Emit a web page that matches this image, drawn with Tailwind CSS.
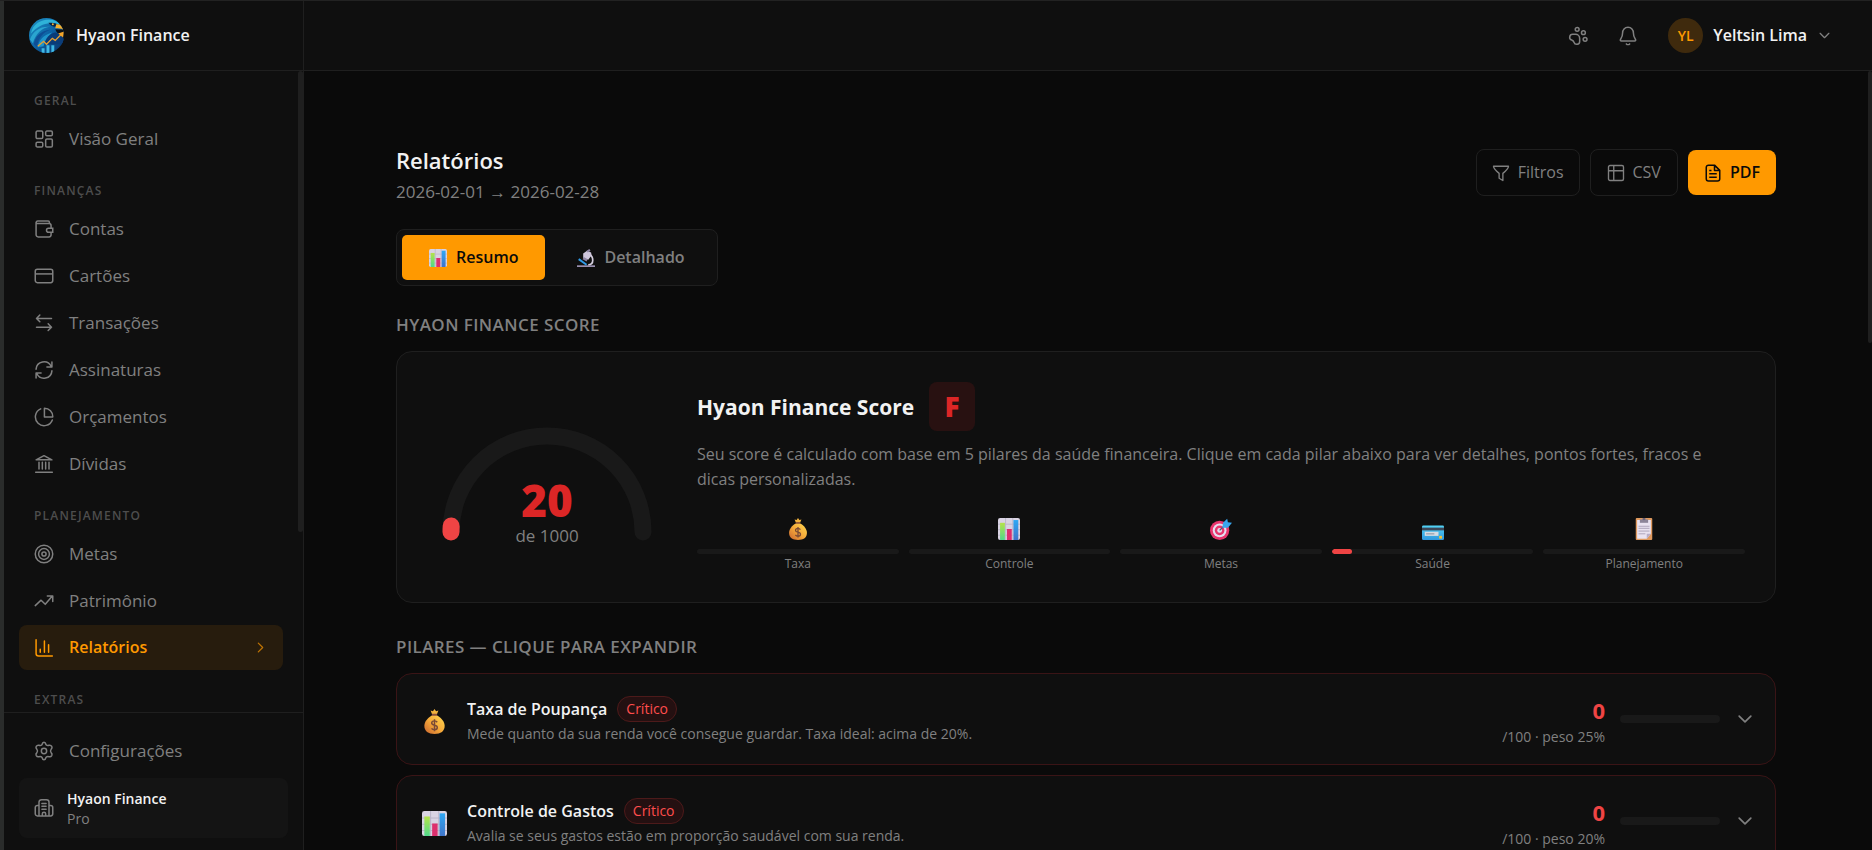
<!DOCTYPE html>
<html lang="pt-BR">
<head>
    <meta charset="UTF-8">
    <meta name="viewport" content="width=device-width, initial-scale=1.0">
    <title>Relatórios - Hyaon Finance</title>
    <script src="https://cdn.jsdelivr.net/npm/@tailwindcss/browser@4"></script>
</head>
<body class="h-screen overflow-hidden bg-[#0a0a0a] text-[17px] leading-[25px] text-[#808080] font-['Open_Sans','Noto_Sans',sans-serif]">

    <!-- Shared icons -->
    <svg class="absolute size-0" xmlns="http://www.w3.org/2000/svg">
        <defs>
            <linearGradient id="bagFill" x1="1" y1="0" x2="0" y2="1"><stop offset="0" stop-color="#ffd84f"/><stop offset=".5" stop-color="#f5a93a"/><stop offset="1" stop-color="#c9642f"/></linearGradient>
            <linearGradient id="barGreen" x1="0" y1="0" x2="0" y2="1"><stop offset="0" stop-color="#b5e34a"/><stop offset="1" stop-color="#4fd98a"/></linearGradient>
            <linearGradient id="barBlue" x1="0" y1="0" x2="0" y2="1"><stop offset="0" stop-color="#2fa8f5"/><stop offset="1" stop-color="#3f74c9"/></linearGradient>
            <linearGradient id="cardFill" x1="0" y1="0" x2="0" y2="1"><stop offset="0" stop-color="#52d3f5"/><stop offset="1" stop-color="#2f97dd"/></linearGradient>
        </defs>
        <symbol id="bag" viewBox="0 0 32 32">
            <path d="M11 2l3 1 2-3 2 3 3-1-2 5h-6z" fill="#f3b33d"/>
            <path d="M13 6h6l1 4h-8z" fill="#8b4f3a"/>
            <path d="M12 8.500h8c5 3 9 8 9 13 0 7-5 10.500-13 10.500S3 28.500 3 21.500c0-5 4-10 9-13z" fill="url(#bagFill)"/>
            <path d="M19.500 17c-.8-1.200-2-1.800-3.500-1.800-2 0-3.600 1.100-3.600 2.800s1.500 2.300 3.600 2.700 3.600 1.300 3.600 3-1.600 2.800-3.600 2.800c-1.600 0-3-.6-3.800-1.800M16 13v15.500" fill="none" stroke="#7a4a36" stroke-width="1.900"/>
        </symbol>
        <symbol id="chart" viewBox="0 0 32 32">
            <rect width="32" height="32" rx="3" fill="#d9d3e3"/>
            <path d="M0 9h32M0 17h32M0 25h32M11 0v32M21.500 0v32" stroke="#b9b2c6" stroke-width="1.200"/>
            <rect x="3" y="7" width="7" height="25" fill="url(#barGreen)"/>
            <rect x="13" y="16" width="7" height="16" fill="#dd2f6e"/>
            <rect x="22.500" y="3" width="7" height="29" fill="url(#barBlue)"/>
        </symbol>
        <symbol id="dart" viewBox="0 0 32 32">
            <circle cx="14" cy="18" r="14" fill="#e8356d"/>
            <circle cx="14" cy="18" r="10" fill="#e6dff0"/>
            <circle cx="14" cy="18" r="7" fill="#e8356d"/>
            <circle cx="14" cy="18" r="3.500" fill="#e6dff0"/>
            <path d="M14 18L24 8" stroke="#5d5470" stroke-width="2"/>
            <path d="M18 14l1-7 6-6 1 5 6 1-6 7z" fill="#39a6ee"/>
        </symbol>
        <symbol id="credit" viewBox="0 0 32 32">
            <rect y="11" width="32" height="21" rx="2" fill="url(#cardFill)"/>
            <rect y="14" width="32" height="4" fill="#3c4657"/>
            <rect x="4" y="20" width="20" height="6" fill="#d5dbe2"/>
            <rect x="6" y="22" width="12" height="2" fill="#9da6b2"/>
            <rect x="25" y="26" width="4" height="4" fill="#f2c437"/>
        </symbol>
        <symbol id="clipboard" viewBox="0 0 32 32">
            <rect x="4" width="24" height="32" rx="1.500" fill="#e09a5f"/>
            <path d="M6 3h20v20l-6 7H6z" fill="#e9e2f1"/>
            <path d="M26 23h-6v7z" fill="#b9adc8"/>
            <path d="M10 2h12v5H10z" fill="#8c8499"/>
            <path d="M14 0h4v3h-4z" fill="#6d6579"/>
            <path d="M8 12h16M8 15h16M8 19h16M8 23h10" stroke="#a79db5" stroke-width="1.300"/>
        </symbol>
        <symbol id="microscope" viewBox="0 0 32 32">
            <path d="M0 29h32v3H0z" fill="#9a90b0"/>
            <path d="M21 10c5 1 7 5 7 10s-3 8-8 8" fill="none" stroke="#d5cfdf" stroke-width="3"/>
            <path d="M11 8l7-5 7 3 1 5-6 8-9-3z" fill="#cfc6dc"/>
            <path d="M17 3l5-3 2 3-5 3zM12 14l7 4-2 4-7-4z" fill="#8d83a3"/>
            <path d="M3 18l14 10" stroke="#2f9be8" stroke-width="3.500"/>
        </symbol>
        <symbol id="down" viewBox="0 0 24 24">
            <path d="M5 8.500l7 7 7-7" fill="none" stroke="currentColor" stroke-width="2" stroke-linecap="round" stroke-linejoin="round"/>
        </symbol>
    </svg>

    <div class="flex h-full border-t border-[#222222]">
        <div class="w-1 shrink-0 bg-[#2a2c2b]"></div>

        <!-- Sidebar -->
        <aside class="flex w-[300px] shrink-0 flex-col border-r border-[#1f1f1f] bg-[#0f0f0f]">
            <div class="flex h-[70px] shrink-0 items-center gap-3 border-b border-[#1f1f1f] pl-[25px]">
                <svg class="size-[35px]" viewBox="0 0 36 36">
                    <defs>
                        <linearGradient id="logoFill" x1="0" y1="0" x2="1" y2="1"><stop offset="0" stop-color="#2098c8"/><stop offset=".5" stop-color="#0d62a4"/><stop offset="1" stop-color="#0a2f63"/></linearGradient>
                        <clipPath id="logoClip"><circle cx="18" cy="18" r="18"/></clipPath>
                    </defs>
                    <g clip-path="url(#logoClip)">
                        <rect width="36" height="36" fill="url(#logoFill)"/>
                        <path d="M9 5C16 0 27 0 33 7l-7-1C18 4 9 8 2 16c1-5 3-8 7-11z" fill="#2fb3d8"/>
                        <path d="M1 22C4 13 12 8 22 9c-9 1-15 7-18 17z" fill="#2aa5d0"/>
                        <path d="M5 27c1-8 7-14 17-15-8 3-12 8-14 18z" fill="#0e4f96"/>
                        <path d="M9 30c1-7 6-13 15-15-5 4-8 8-9 14z" fill="#1f95cb"/>
                        <path d="M17 24c2-5 5-8 10-9l9 3v9H16z" fill="#0b3c78"/>
                        <path d="M27 11.500l9 .5v10l-3-5c-2 0-5-2-6-5.500z" fill="#0d1218"/>
                        <path d="M20 5c4 0 7 0 10 2l-3 2c-3 0-5-1-7-4z" fill="#0b2340"/>
                        <circle cx="24.500" cy="6.500" r="1" fill="#f5b73a"/>
                        <path d="M28 6.500c4 0 7 1.500 7.500 5.500-3-1.500-5-1.500-8.500-1.500z" fill="#f6b02c"/>
                        <path d="M13 36v-5h3v5zM18 36v-8h3v8zM23 36v-8h3v8z" fill="#3fb9e4"/>
                        <path d="M9 29l6-5 3 3 6-6 3 2 6-6" fill="none" stroke="#e9a030" stroke-width="1.300"/>
                        <path d="M30 16l6-2-1 6z" fill="#f3a52a"/>
                    </g>
                </svg>
                <span class="text-[16px] font-semibold text-[#f2f2f2]">Hyaon Finance</span>
            </div>

            <div class="flex min-h-0 flex-1">
                <nav class="flex flex-1 flex-col gap-[15px] overflow-hidden p-[15px]">
                    <div class="flex flex-col gap-[2px]">
                        <h3 class="-mb-[2px] h-[30px] px-[15px] text-[12px] leading-[30px] font-semibold tracking-widest text-[#4d4d4d]">GERAL</h3>
                        <a href="#" class="flex h-[45px] items-center gap-[15px] rounded-lg px-[15px]">
                            <svg class="size-5" viewBox="0 0 24 24" fill="none" stroke="currentColor" stroke-width="1.800"><rect x="2.500" y="2.500" width="8" height="9" rx="1.500"/><rect x="14" y="2.500" width="8" height="5.500" rx="1.500"/><rect x="2.500" y="16" width="8" height="5.500" rx="1.500"/><rect x="14" y="12" width="8" height="9.500" rx="1.500"/></svg>
                            Visão Geral
                        </a>
                    </div>
                    <div class="flex flex-col gap-[2px]">
                        <h3 class="-mb-[2px] h-[30px] px-[15px] text-[12px] leading-[30px] font-semibold tracking-widest text-[#4d4d4d]">FINANÇAS</h3>
                        <a href="#" class="flex h-[45px] items-center gap-[15px] rounded-lg px-[15px]">
                            <svg class="size-5" viewBox="0 0 24 24" fill="none" stroke="currentColor" stroke-width="1.800"><path d="M20.500 11V8a2.500 2.500 0 0 0-2.500-2.500H4.500a2 2 0 0 1-2-2V19A2.500 2.500 0 0 0 5 21.500h13a2.500 2.500 0 0 0 2.500-2.500v-3M2.500 4a2 2 0 0 1 2-1.500H17A1.500 1.500 0 0 1 18.500 4v1.500"/><path d="M22.500 11h-5a2.500 2.500 0 0 0 0 5h5z"/></svg>
                            Contas
                        </a>
                        <a href="#" class="flex h-[45px] items-center gap-[15px] rounded-lg px-[15px]">
                            <svg class="size-5" viewBox="0 0 24 24" fill="none" stroke="currentColor" stroke-width="1.800"><rect x="1.500" y="4" width="21" height="16" rx="2.500"/><path d="M1.500 9.500h21"/></svg>
                            Cartões
                        </a>
                        <a href="#" class="flex h-[45px] items-center gap-[15px] rounded-lg px-[15px]">
                            <svg class="size-5" viewBox="0 0 24 24" fill="none" stroke="currentColor" stroke-width="1.800" stroke-linecap="round" stroke-linejoin="round"><path d="M21 6.500H3M7 2.500l-4 4 4 4M3 17h18M17 13l4 4-4 4"/></svg>
                            Transações
                        </a>
                        <a href="#" class="flex h-[45px] items-center gap-[15px] rounded-lg px-[15px]">
                            <svg class="size-5" viewBox="0 0 24 24" fill="none" stroke="currentColor" stroke-width="1.800" stroke-linecap="round" stroke-linejoin="round"><path d="M2.500 11A9.500 9.500 0 0 1 20.500 7.500M21.500 2.500v6h-6M21.500 13a9.500 9.500 0 0 1-18 3.500M2.500 21.500v-6h6"/></svg>
                            Assinaturas
                        </a>
                        <a href="#" class="flex h-[45px] items-center gap-[15px] rounded-lg px-[15px]">
                            <svg class="size-5" viewBox="0 0 24 24" fill="none" stroke="currentColor" stroke-width="1.800" stroke-linecap="round" stroke-linejoin="round"><path d="M8 2.200a10.500 10.500 0 1 0 14 13.300M12.500 1.500a10 10 0 0 1 10 10.500h-10z"/></svg>
                            Orçamentos
                        </a>
                        <a href="#" class="flex h-[45px] items-center gap-[15px] rounded-lg px-[15px]">
                            <svg class="size-5" viewBox="0 0 24 24" fill="none" stroke="currentColor" stroke-width="1.800" stroke-linecap="round" stroke-linejoin="round"><path d="M2.500 7L12 2l9.500 5zM6 10v8M10 10v8M14 10v8M18 10v8M2 22h20"/></svg>
                            Dívidas
                        </a>
                    </div>
                    <div class="flex flex-col gap-[2px]">
                        <h3 class="-mb-[2px] h-[30px] px-[15px] text-[12px] leading-[30px] font-semibold tracking-widest text-[#4d4d4d]">PLANEJAMENTO</h3>
                        <a href="#" class="flex h-[45px] items-center gap-[15px] rounded-lg px-[15px]">
                            <svg class="size-5" viewBox="0 0 24 24" fill="none" stroke="currentColor" stroke-width="1.800"><circle cx="12" cy="12" r="10.500"/><circle cx="12" cy="12" r="6.500"/><circle cx="12" cy="12" r="2.500"/></svg>
                            Metas
                        </a>
                        <a href="#" class="flex h-[45px] items-center gap-[15px] rounded-lg px-[15px]">
                            <svg class="size-5" viewBox="0 0 24 24" fill="none" stroke="currentColor" stroke-width="1.800" stroke-linecap="round" stroke-linejoin="round"><path d="M1.500 17.500L8.500 11l5 5L22 6M16 6h6.500v6.500"/></svg>
                            Patrimônio
                        </a>
                        <a href="#" class="flex h-[45px] items-center gap-[15px] rounded-lg bg-[#271c0d] px-[15px] text-[16px] font-semibold text-[#ff9900]" aria-current="page">
                            <svg class="size-5" viewBox="0 0 24 24" fill="none" stroke="currentColor" stroke-width="1.800" stroke-linecap="round" stroke-linejoin="round"><path d="M2.500 2v16.500a3 3 0 0 0 3 3H22M7.500 13.500V17M12.500 3.500V17M17.500 8v9"/></svg>
                            <span class="flex-1">Relatórios</span>
                            <svg class="size-[15px] opacity-70" viewBox="0 0 24 24" fill="none" stroke="currentColor" stroke-width="2" stroke-linecap="round" stroke-linejoin="round"><path d="M8.500 5l7 7-7 7"/></svg>
                        </a>
                    </div>
                    <h3 class="h-[30px] px-[15px] text-[12px] leading-[30px] font-semibold tracking-widest text-[#4d4d4d]">EXTRAS</h3>
                </nav>
                <div class="w-[5px] shrink-0"><div class="h-[461px] rounded-full bg-[#1f1f1f]"></div></div>
            </div>

            <div class="flex shrink-0 flex-col gap-[5px] border-t border-[#1f1f1f] px-[15px] pt-[15px] pb-3">
                <a href="#" class="flex h-[45px] items-center gap-[15px] rounded-lg px-[15px]">
                    <svg class="size-5" viewBox="0 0 24 24" fill="none" stroke="currentColor" stroke-width="1.800" stroke-linejoin="round"><path d="M9.500 4.500C10 2.500 10.500 1.500 12 1.500s2 1 2.500 3c1 1 2 1.200 3.500.7 2-.5 2.500 0 3.300 1.300.8 1.500.7 2.200-.8 3.500-1 1.300-1 2.700 0 4 1.500 1.300 1.600 2 .8 3.500-.8 1.300-1.300 1.800-3.300 1.300-1.500-.5-2.500-.3-3.500.7-.5 2-1 3-2.500 3s-2-1-2.500-3c-1-1-2-1.200-3.500-.7-2 .5-2.500 0-3.300-1.300-.8-1.500-.7-2.200.8-3.500 1-1.300 1-2.700 0-4-1.500-1.300-1.600-2-.8-3.500C3.500 5.200 4 4.700 6 5.200c1.500.5 2.500.3 3.500-.7z"/><circle cx="12" cy="12" r="3.200"/></svg>
                    Configurações
                </a>
                <button type="button" class="flex h-[60px] items-center gap-[13px] rounded-lg bg-[#141414] px-[15px] text-left">
                    <svg class="size-5" viewBox="0 0 24 24" fill="none" stroke="currentColor" stroke-width="1.800" stroke-linecap="round" stroke-linejoin="round"><path d="M6 21.500V5a3 3 0 0 1 3-3h6a3 3 0 0 1 3 3v16.500M6 9H4a2.500 2.500 0 0 0-2.500 2.500V19A2.500 2.500 0 0 0 4 21.500h16a2.500 2.500 0 0 0 2.500-2.500v-7.500A2.500 2.500 0 0 0 20 9h-2M9.500 6.500h5M9.500 10h5M9.500 13.500h5M10 21.500V19a2 2 0 0 1 4 0v2.500"/></svg>
                    <span class="flex flex-col pt-[2px] text-[14px] leading-5">
                        <span class="font-semibold text-[#f2f2f2]">Hyaon Finance</span>
                        <span>Pro</span>
                    </span>
                </button>
            </div>
        </aside>

        <div class="flex min-w-0 flex-1 flex-col">
            <!-- Top bar -->
            <header class="flex h-[70px] shrink-0 items-center justify-end border-b border-[#1f1f1f] bg-[#0f0f0f] pr-10">
                <button type="button" aria-label="Pets" class="mr-[30px]">
                    <svg class="size-5" viewBox="0 0 24 24" fill="none" stroke="currentColor" stroke-width="1.800"><circle cx="11" cy="4" r="2.300"/><circle cx="18.500" cy="8" r="2.300"/><circle cx="20.500" cy="16" r="2.300"/><path d="M9 10a5 5 0 0 1 5 5v3.500a3.500 3.500 0 0 1-6.840 1.045Q6.520 17.480 4.460 16.840A3.500 3.500 0 0 1 5.500 10Z"/></svg>
                </button>
                <button type="button" aria-label="Notificações" class="mr-[30px]">
                    <svg class="size-5" viewBox="0 0 24 24" fill="none" stroke="currentColor" stroke-width="1.800" stroke-linecap="round" stroke-linejoin="round"><path d="M12 1.500c-4 0-6.500 3-6.500 7 0 4.500-1 5.500-2.500 7.500-.7 1 0 2 1 2h16c1 0 1.700-1 1-2-1.500-2-2.500-3-2.500-7.500 0-4-2.500-7-6.500-7zM10 21.500c1 1 3 1 4 0"/></svg>
                </button>
                <button type="button" class="flex items-center gap-[10px]">
                    <span class="flex size-[35px] items-center justify-center rounded-full bg-[#3f2a0d] text-[14px] font-semibold text-[#ff9900]">YL</span>
                    <span class="text-[16px] font-semibold text-[#f2f2f2]">Yeltsin Lima</span>
                    <svg class="size-[15px]"><use href="#down"/></svg>
                </button>
            </header>

            <div class="flex min-h-0 flex-1">
                <main class="min-w-0 flex-1 overflow-hidden">
                    <div class="mx-auto flex max-w-[1440px] flex-col px-[30px] pt-[70px]">
                        <div class="flex items-center justify-between">
                            <div>
                                <h1 class="text-[22px] leading-[38px] font-semibold text-[#f2f2f2]">Relatórios</h1>
                                <p>2026-02-01 → 2026-02-28</p>
                            </div>
                            <div class="flex items-center gap-[10px] text-[16px]">
                                <button type="button" class="flex h-[47px] items-center gap-2 rounded-lg border border-[#1f1f1f] px-[15px]">
                                    <svg class="size-[18px]" viewBox="0 0 24 24" fill="none" stroke="currentColor" stroke-width="1.800" stroke-linejoin="round"><path d="M2 3h20c0 3-2 5-7.500 9.500V22L9.500 19v-6.500C4 8 2 6 2 3z"/></svg>
                                    Filtros
                                </button>
                                <button type="button" class="flex h-[47px] items-center gap-2 rounded-lg border border-[#1f1f1f] px-4">
                                    <svg class="size-[18px]" viewBox="0 0 24 24" fill="none" stroke="currentColor" stroke-width="1.800"><rect x="2" y="2" width="20" height="20" rx="2"/><path d="M2 9h20M9 2v20"/></svg>
                                    CSV
                                </button>
                                <button type="button" class="flex h-[45px] items-center gap-2 rounded-lg bg-[#ff9900] px-4 font-semibold text-[#0a0a0a]">
                                    <svg class="size-[18px]" viewBox="0 0 24 24" fill="none" stroke="currentColor" stroke-width="2" stroke-linejoin="round"><path d="M14 1.500H6a3 3 0 0 0-3 3v15a3 3 0 0 0 3 3h12a3 3 0 0 0 3-3V8.500zM14 1.500v7h7M7 8.500h3M7 13h10M7 17.500h10"/></svg>
                                    PDF
                                </button>
                            </div>
                        </div>

                        <div class="mt-[25px] flex w-fit gap-[5px] rounded-lg border border-[#1f1f1f] bg-[#0f0f0f] p-[5px] text-[16px] font-semibold">
                            <button type="button" class="flex h-[45px] items-center gap-[9px] rounded-[5px] bg-[#ff9900] px-[27px] text-[#0a0a0a]">
                                <svg class="size-[18px]"><use href="#chart"/></svg>Resumo
                            </button>
                            <button type="button" class="flex h-[45px] items-center gap-[9px] rounded-[5px] px-[27px]">
                                <svg class="size-[18px]"><use href="#microscope"/></svg>Detalhado
                            </button>
                        </div>

                        <h2 class="mt-[26px] font-semibold tracking-wide">HYAON FINANCE SCORE</h2>

                        <section class="mt-[14px] flex items-center gap-10 rounded-2xl border border-[#1f1f1f] bg-[#0f0f0f] px-[30px] pt-[30px] pb-[29px]">
                            <div class="relative w-[230px] shrink-0 pl-[10px]">
                                <svg class="mt-[22px] mb-2 block w-[220px]" viewBox="0 0 220 130" fill="none" stroke-width="17" stroke-linecap="round">
                                    <path d="M14 112a96 96 0 0 1 192 0" stroke="#191919"/>
                                    <path d="M14 112q0-3 .2-6" stroke="#ef4444"/>
                                </svg>
                                <div class="absolute right-0 bottom-[11px] left-[10px] text-center leading-[22px]">
                                    <p class="text-[44px] leading-[50px] font-extrabold text-[#dc2626]">20</p>
                                    <p>de 1000</p>
                                </div>
                            </div>
                            <div class="min-w-0 flex-1">
                                <div class="flex items-center gap-[15px]">
                                    <h3 class="text-[21px] leading-[30px] font-bold text-[#f2f2f2]">Hyaon Finance Score</h3>
                                    <span class="flex h-[49px] w-[46px] items-center justify-center rounded-lg bg-[#281111] text-[28px] font-extrabold text-[#dc2626]">F</span>
                                </div>
                                <p class="mt-[11px] pr-4 text-[16px]">Seu score é calculado com base em 5 pilares da saúde financeira. Clique em cada pilar abaixo para ver detalhes, pontos fortes, fracos e dicas personalizadas.</p>
                                <div class="mt-[26px] grid grid-cols-5 gap-[10px] text-center text-[12px] leading-[18px]">
                                    <div>
                                        <svg class="mx-auto size-[22px]"><use href="#bag"/></svg>
                                        <div class="mt-[9px] mb-[1px] h-[5px] overflow-hidden rounded-full bg-[#191919]"></div>
                                        Taxa
                                    </div>
                                    <div>
                                        <svg class="mx-auto size-[22px]"><use href="#chart"/></svg>
                                        <div class="mt-[9px] mb-[1px] h-[5px] overflow-hidden rounded-full bg-[#191919]"></div>
                                        Controle
                                    </div>
                                    <div>
                                        <svg class="mx-auto size-[22px]"><use href="#dart"/></svg>
                                        <div class="mt-[9px] mb-[1px] h-[5px] overflow-hidden rounded-full bg-[#191919]"></div>
                                        Metas
                                    </div>
                                    <div>
                                        <svg class="mx-auto size-[22px]"><use href="#credit"/></svg>
                                        <div class="mt-[9px] mb-[1px] h-[5px] overflow-hidden rounded-full bg-[#191919]"><div class="h-full rounded-full bg-[#ef4444]" style="width: 10%"></div></div>
                                        Saúde
                                    </div>
                                    <div>
                                        <svg class="mx-auto size-[22px]"><use href="#clipboard"/></svg>
                                        <div class="mt-[9px] mb-[1px] h-[5px] overflow-hidden rounded-full bg-[#191919]"></div>
                                        Planejamento
                                    </div>
                                </div>
                            </div>
                        </section>

                        <h2 class="mt-[31px] font-semibold tracking-wide">PILARES — CLIQUE PARA EXPANDIR</h2>

                        <div class="mt-[14px] flex flex-col gap-[10px]">
                            <button type="button" class="flex h-[92px] items-center rounded-2xl border border-[#3a1416] bg-[#0f0f0f] pr-5 pl-[25px] text-left text-[14px] leading-5">
                                <svg class="mt-1 mr-5 size-[25px]"><use href="#bag"/></svg>
                                <span class="flex flex-1 flex-col gap-[2px] pt-[2px]">
                                    <span class="flex items-center gap-[10px]">
                                        <span class="text-[16px] leading-[25px] font-semibold text-[#f2f2f2]">Taxa de Poupança</span>
                                        <span class="rounded-full border border-[#4d1a1a] bg-[#241011] px-2 py-[2px] text-[#ff4d4d]">Crítico</span>
                                    </span>
                                    <span>Mede quanto da sua renda você consegue guardar. Taxa ideal: acima de 20%.</span>
                                </span>
                                <span class="mr-[15px] flex flex-col gap-[2px] pt-1 text-right">
                                    <span class="text-[22px] leading-[30px] font-bold text-[#ef4444]">0</span>
                                    <span>/100 · peso 25%</span>
                                </span>
                                <span class="mr-[15px] h-2 w-[100px] rounded-full bg-[#191919]"></span>
                                <svg class="size-5"><use href="#down"/></svg>
                            </button>
                            <button type="button" class="flex h-[92px] items-center rounded-2xl border border-[#3a1416] bg-[#0f0f0f] pr-5 pl-[25px] text-left text-[14px] leading-5">
                                <svg class="mt-1 mr-5 size-[25px]"><use href="#chart"/></svg>
                                <span class="flex flex-1 flex-col gap-[2px] pt-[2px]">
                                    <span class="flex items-center gap-[10px]">
                                        <span class="text-[16px] leading-[25px] font-semibold text-[#f2f2f2]">Controle de Gastos</span>
                                        <span class="rounded-full border border-[#4d1a1a] bg-[#241011] px-2 py-[2px] text-[#ff4d4d]">Crítico</span>
                                    </span>
                                    <span>Avalia se seus gastos estão em proporção saudável com sua renda.</span>
                                </span>
                                <span class="mr-[15px] flex flex-col gap-[2px] pt-1 text-right">
                                    <span class="text-[22px] leading-[30px] font-bold text-[#ef4444]">0</span>
                                    <span>/100 · peso 20%</span>
                                </span>
                                <span class="mr-[15px] h-2 w-[100px] rounded-full bg-[#191919]"></span>
                                <svg class="size-5"><use href="#down"/></svg>
                            </button>
                        </div>
                    </div>
                </main>
                <div class="w-1 shrink-0"><div class="h-[272px] rounded-full bg-[#1f1f1f]"></div></div>
            </div>
        </div>
    </div>
</body>
</html>
